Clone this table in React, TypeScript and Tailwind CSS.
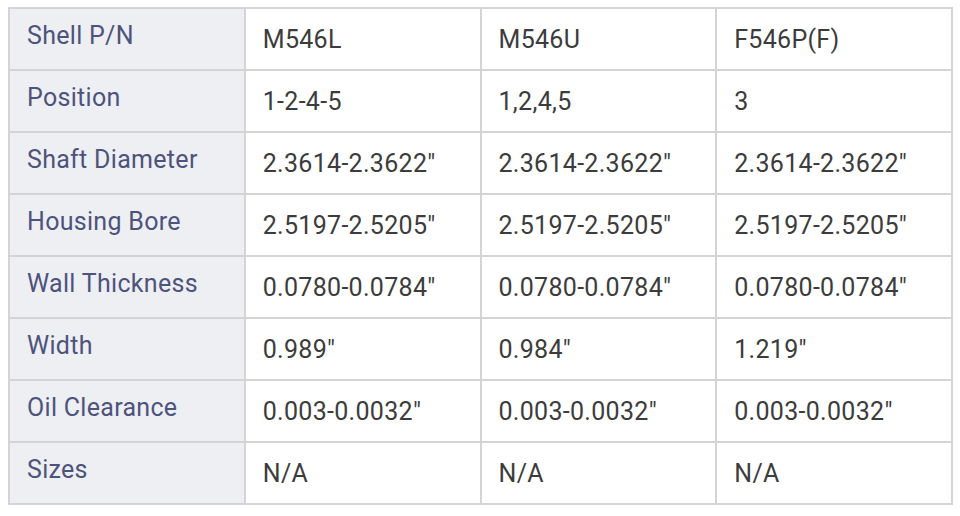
const rows: [string, string, string, string][] = [
  ["Shell P/N", "M546L", "M546U", "F546P(F)"],
  ["Position", "1-2-4-5", "1,2,4,5", "3"],
  ["Shaft Diameter", '2.3614-2.3622"', '2.3614-2.3622"', '2.3614-2.3622"'],
  ["Housing Bore", '2.5197-2.5205"', '2.5197-2.5205"', '2.5197-2.5205"'],
  ["Wall Thickness", '0.0780-0.0784"', '0.0780-0.0784"', '0.0780-0.0784"'],
  ["Width", '0.989"', '0.984"', '1.219"'],
  ["Oil Clearance", '0.003-0.0032"', '0.003-0.0032"', '0.003-0.0032"'],
  ["Sizes", "N/A", "N/A", "N/A"],
];

export default function App() {
  return (
    <div className="h-[516px] w-[960px] bg-white pl-[8px] pt-[7px] font-['Roboto',sans-serif]">
      <table className="w-[945px] table-fixed border-collapse text-[25px] leading-none tracking-[0.3px]">
        <tbody>
          {rows.map(([label, a, b, c]) => (
            <tr key={label} className="h-[62px]">
              <th className="border-2 border-[#d4d4d4] bg-[#eeeff3] pl-[17px] pb-[8px] text-left align-middle font-normal text-[#4d537c]">
                {label}
              </th>
              {[a, b, c].map((v, i) => (
                <td
                  key={i}
                  className="border-2 border-[#d4d4d4] pl-[17px] pt-[0px] text-left align-middle text-[#3c3c3c]"
                >
                  {v}
                </td>
              ))}
            </tr>
          ))}
        </tbody>
      </table>
    </div>
  );
}
